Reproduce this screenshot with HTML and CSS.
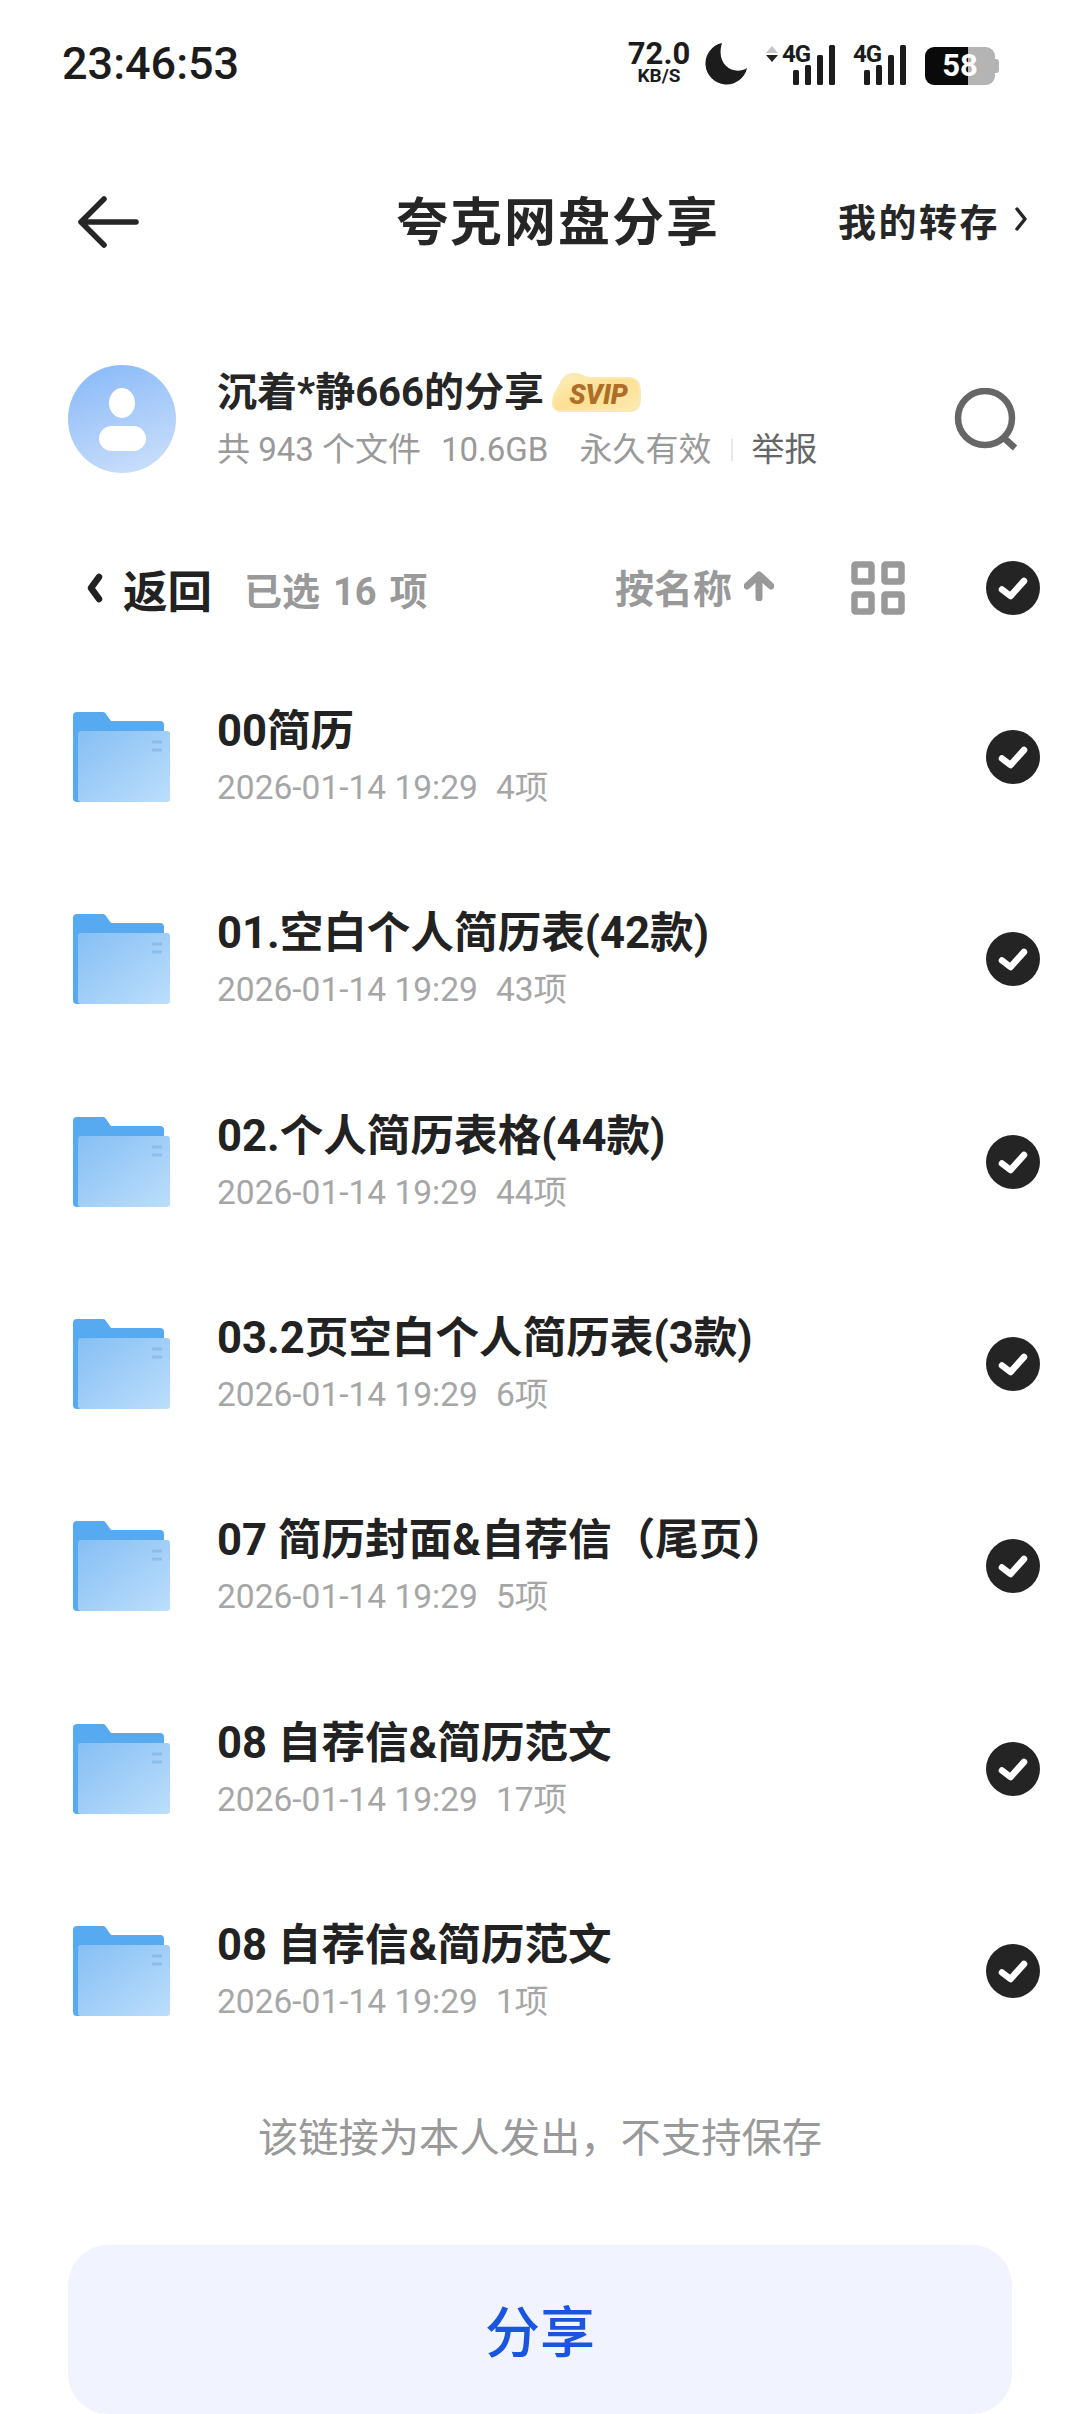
FILE: index.html
```html
<!DOCTYPE html>
<html lang="zh-CN">
<head>
    <meta charset="UTF-8">
    <title>夸克网盘分享</title>
    <link rel="stylesheet" href="styles.css">
</head>
<body>
    <svg class="sprite" aria-hidden="true">
        <defs>
            <linearGradient id="folderFront" x1="0" y1="0" x2="1" y2="1">
                <stop offset="0" stop-color="#86bff4"/>
                <stop offset="1" stop-color="#bcdefc"/>
            </linearGradient>
            <linearGradient id="svipFill" x1="0" y1="0" x2="1" y2="1">
                <stop offset="0" stop-color="#fff0c2"/>
                <stop offset=".5" stop-color="#fcdf90"/>
                <stop offset="1" stop-color="#fdeab4"/>
            </linearGradient>
            <symbol id="folder" viewBox="0 0 97 90">
                <path d="M0 4a4 4 0 0 1 4-4h26a4 4 0 0 1 3 2l5 7h49a4 4 0 0 1 4 4v77H4a4 4 0 0 1-4-4z" fill="#58aaf0"/>
                <rect x="5" y="19" width="92" height="71" rx="3" fill="url(#folderFront)"/>
                <path d="M79 30h10M79 38h10" stroke="#7fb2e2" stroke-width="3" opacity=".6"/>
            </symbol>
            <symbol id="check" viewBox="0 0 54 54">
                <circle cx="27" cy="27" r="27" fill="#242424"/>
                <path d="M16 28.5l8.5 6.5L38 20" fill="none" stroke="#fff" stroke-width="6.5" stroke-linecap="round" stroke-linejoin="round"/>
            </symbol>
            <symbol id="bars" viewBox="0 0 42 40">
                <rect x="0" y="25" width="6" height="15" rx="1.5"/>
                <rect x="12" y="20" width="6" height="20" rx="1.5"/>
                <rect x="24" y="10" width="6" height="30" rx="1.5"/>
                <rect x="36" y="0" width="6" height="40" rx="1.5"/>
            </symbol>
        </defs>
    </svg>

    <div class="status-bar">
        <span class="clock">23:46:53</span>
        <div class="status-icons">
            <div class="speed">
                <span class="speed-num">72.0</span>
                <span class="speed-unit">KB/S</span>
            </div>
            <svg class="moon" viewBox="0 0 42 42"><path d="M17 0A21 21 0 1 0 42 25C30 33 10 23 17 0z" fill="#1c1c1c"/></svg>
            <div class="signal signal-first">
                <svg class="arrows" viewBox="0 0 12 16"><path d="M6 0l6 7H0z" fill="#c4c4c4"/><path d="M6 16L0 9h12z" fill="#222"/></svg>
                <span class="net">4G</span>
                <svg class="bars"><use href="#bars"/></svg>
            </div>
            <div class="signal signal-second">
                <span class="net">4G</span>
                <svg class="bars"><use href="#bars"/></svg>
            </div>
            <div class="battery">58</div>
        </div>
    </div>

    <div class="top-bar">
        <svg class="back-arrow" viewBox="0 0 62 52"><path d="M27 3L4 26l23 23M4 26h55" fill="none" stroke="#262626" stroke-width="5.5" stroke-linecap="round" stroke-linejoin="round"/></svg>
        <h1 class="page-title">夸克网盘分享</h1>
        <div class="saved-link">我的转存
            <svg class="saved-chevron" viewBox="0 0 12 24"><path d="M2 2l8 10-8 10" fill="none" stroke="#262626" stroke-width="3.5" stroke-linecap="round" stroke-linejoin="round"/></svg>
        </div>
    </div>

    <div class="share-info">
        <div class="avatar">
            <span class="avatar-head"></span>
            <span class="avatar-body"></span>
        </div>
        <div class="share-text">
            <div class="share-name">沉着*静666的分享
                <span class="svip">
                    <svg class="svip-cloud" viewBox="0 0 89 40"><path d="M8 38C2 38 0 32 1 27c1-7 5-11 8-17C12 3 18 0 25 1c5 1 8 4 13 4h38c8 0 12 5 12 13v9c0 7-4 11-10 11z" fill="url(#svipFill)" stroke="#fbe9b4" stroke-width="2"/></svg>
                    <span class="svip-text">SVIP</span>
                </span>
            </div>
            <div class="share-meta">
                <span>共 943 个文件</span>
                <span class="share-size">10.6GB</span>
                <span class="share-expire">永久有效</span>
                <span class="divider"></span>
                <span class="report">举报</span>
            </div>
        </div>
        <svg class="search" viewBox="0 0 66 64"><circle cx="31" cy="30" r="27" fill="none" stroke="#666" stroke-width="6.5"/><path d="M50 50l11 10" stroke="#666" stroke-width="6.5"/></svg>
    </div>

    <div class="toolbar">
        <svg class="return-chevron" viewBox="0 0 16 30"><path d="M12 4L4 15l8 11" fill="none" stroke="#222" stroke-width="6.5" stroke-linecap="round" stroke-linejoin="round"/></svg>
        <span class="return-label">返回</span>
        <span class="selected-count">已选 16 项</span>
        <span class="sort-label">按名称
            <svg class="sort-arrow" viewBox="0 0 30 30"><path d="M15 27V5M3 15L15 4l12 11" fill="none" stroke="#999" stroke-width="7" stroke-linecap="round" stroke-linejoin="round"/></svg>
        </span>
        <svg class="grid-icon" viewBox="0 0 54 54">
            <g fill="none" stroke="#999" stroke-width="6.5">
                <rect x="3.500" y="3.500" width="17" height="17" rx="1"/>
                <rect x="33.500" y="3.500" width="17" height="17" rx="1"/>
                <rect x="3.500" y="33.500" width="17" height="17" rx="1"/>
                <rect x="33.500" y="33.500" width="17" height="17" rx="1"/>
            </g>
        </svg>
        <svg class="check"><use href="#check"/></svg>
    </div>

    <ul class="file-list">
        <li class="file-row">
            <svg class="folder"><use href="#folder"/></svg>
            <div class="file-text">
                <div class="file-name">00简历</div>
                <div class="file-meta">2026-01-14 19:29<span class="file-count">4项</span></div>
            </div>
            <svg class="check"><use href="#check"/></svg>
        </li>
        <li class="file-row">
            <svg class="folder"><use href="#folder"/></svg>
            <div class="file-text">
                <div class="file-name">01.空白个人简历表(42款)</div>
                <div class="file-meta">2026-01-14 19:29<span class="file-count">43项</span></div>
            </div>
            <svg class="check"><use href="#check"/></svg>
        </li>
        <li class="file-row">
            <svg class="folder"><use href="#folder"/></svg>
            <div class="file-text">
                <div class="file-name">02.个人简历表格(44款)</div>
                <div class="file-meta">2026-01-14 19:29<span class="file-count">44项</span></div>
            </div>
            <svg class="check"><use href="#check"/></svg>
        </li>
        <li class="file-row">
            <svg class="folder"><use href="#folder"/></svg>
            <div class="file-text">
                <div class="file-name">03.2页空白个人简历表(3款)</div>
                <div class="file-meta">2026-01-14 19:29<span class="file-count">6项</span></div>
            </div>
            <svg class="check"><use href="#check"/></svg>
        </li>
        <li class="file-row">
            <svg class="folder"><use href="#folder"/></svg>
            <div class="file-text">
                <div class="file-name">07 简历封面&amp;自荐信（尾页）</div>
                <div class="file-meta">2026-01-14 19:29<span class="file-count">5项</span></div>
            </div>
            <svg class="check"><use href="#check"/></svg>
        </li>
        <li class="file-row">
            <svg class="folder"><use href="#folder"/></svg>
            <div class="file-text">
                <div class="file-name">08 自荐信&amp;简历范文</div>
                <div class="file-meta">2026-01-14 19:29<span class="file-count">17项</span></div>
            </div>
            <svg class="check"><use href="#check"/></svg>
        </li>
        <li class="file-row">
            <svg class="folder"><use href="#folder"/></svg>
            <div class="file-text">
                <div class="file-name">08 自荐信&amp;简历范文</div>
                <div class="file-meta">2026-01-14 19:29<span class="file-count">1项</span></div>
            </div>
            <svg class="check"><use href="#check"/></svg>
        </li>
    </ul>

    <p class="notice">该链接为本人发出，不支持保存</p>
    <button class="share-button" type="button">分享</button>
</body>
</html>
```

FILE: styles.css
```css
* {
    box-sizing: border-box;
}

html, body {
    margin: 0;
    padding: 0;
}

body {
    width: 1080px;
    height: 2414px;
    overflow: hidden;
    background-color: #fff;
    color: #222;
    font-family: Roboto, "Noto Sans CJK SC", sans-serif;
    display: flex;
    flex-direction: column;
}

.sprite {
    width: 0;
    height: 0;
    display: block;
}

/* status bar */
.status-bar {
    height: 126px;
    padding: 0 0 0 62px;
    display: flex;
    align-items: center;
    flex-shrink: 0;
}

.clock {
    font-size: 45px;
    font-weight: 500;
    color: #1c1c1c;
}

.status-icons {
    margin-left: auto;
    width: 453px;
    height: 44px;
    display: flex;
    align-items: flex-end;
    color: #1c1c1c;
}

.speed {
    width: 64px;
    display: flex;
    flex-direction: column;
    align-items: center;
    margin-right: 14px;
    font-weight: 700;
    line-height: 1;
}

.speed-num {
    font-size: 31px;
    height: 26px;
    line-height: 26px;
}

.speed-unit {
    font-size: 19px;
    height: 18px;
    line-height: 18px;
}

.moon {
    width: 42px;
    height: 42px;
    margin-right: 19px;
}

.signal {
    position: relative;
    height: 40px;
    display: flex;
    align-items: flex-end;
    justify-content: flex-end;
}

.signal-first {
    width: 69px;
    margin-right: 18px;
}

.signal-second {
    width: 53px;
    margin-right: 19px;
}

.arrows {
    position: absolute;
    left: 0;
    top: 1px;
    width: 12px;
    height: 16px;
}

.net {
    position: absolute;
    top: -2px;
    font-size: 24px;
    font-weight: 700;
    line-height: 22px;
    letter-spacing: -1px;
}

.signal-first .net {
    left: 16px;
}

.signal-second .net {
    left: 0;
}

.bars {
    width: 42px;
    height: 40px;
    fill: #1c1c1c;
}

.battery {
    position: relative;
    width: 70px;
    height: 38px;
    border-radius: 9px;
    background: linear-gradient(to right, #0a0a0a 61%, #b4b4b4 61%);
    color: #fff;
    font-size: 31px;
    font-weight: 700;
    line-height: 38px;
    text-align: center;
}

.battery::after {
    content: "";
    position: absolute;
    left: 70px;
    top: 12px;
    width: 4px;
    height: 14px;
    border-radius: 0 3px 3px 0;
    background-color: #b4b4b4;
}

/* title bar */
.top-bar {
    height: 192px;
    position: relative;
    display: flex;
    align-items: center;
    flex-shrink: 0;
}

.back-arrow {
    width: 62px;
    height: 52px;
    margin-left: 77px;
}

.page-title {
    position: absolute;
    left: 396px;
    top: 64px;
    margin: 0;
    font-size: 52px;
    line-height: 68px;
    font-weight: 700;
    letter-spacing: 2px;
    color: #262626;
}

.saved-link {
    margin-left: auto;
    margin-right: 53px;
    margin-bottom: 6px;
    display: flex;
    align-items: center;
    font-size: 38px;
    font-weight: 700;
    letter-spacing: 2.500px;
    color: #262626;
}

.saved-chevron {
    width: 12px;
    height: 24px;
    margin-left: 15px;
}

/* share info */
.share-info {
    height: 228px;
    padding: 47px 60px 0 68px;
    display: flex;
    align-items: flex-start;
    flex-shrink: 0;
}

.avatar {
    width: 108px;
    height: 108px;
    border-radius: 50%;
    background: linear-gradient(160deg, #86b8f8, #cfe1fb);
    display: flex;
    flex-direction: column;
    align-items: center;
    justify-content: center;
    gap: 8px;
    flex-shrink: 0;
}

.avatar-head {
    width: 26px;
    height: 30px;
    border-radius: 50%;
    background-color: #fff;
}

.avatar-body {
    width: 47px;
    height: 25px;
    border-radius: 13px;
    background-color: #fff;
}

.share-text {
    margin-left: 41px;
    flex: 1;
}

.share-name {
    font-size: 40px;
    line-height: 56px;
    font-weight: 700;
    color: #262626;
    display: flex;
    align-items: center;
    white-space: nowrap;
}

.svip {
    position: relative;
    margin-left: 8px;
    width: 89px;
    height: 40px;
    display: flex;
    align-items: center;
    justify-content: center;
}

.svip-cloud {
    position: absolute;
    left: 0;
    top: 0;
    width: 89px;
    height: 40px;
}

.svip-text {
    position: relative;
    padding: 3px 0 0 4px;
    color: #ad6e28;
    font-size: 27px;
    line-height: 34px;
    font-weight: 900;
    font-style: italic;
}

.share-meta {
    margin-top: 7px;
    font-size: 33px;
    line-height: 44px;
    color: #999;
    display: flex;
    align-items: center;
}

.share-size {
    margin-left: 20px;
}

.share-expire {
    margin-left: 31px;
}

.divider {
    width: 2px;
    height: 22px;
    margin: 0 18px 0 20px;
    background-color: #e8e8e8;
}

.report {
    color: #666;
}

.search {
    width: 66px;
    height: 64px;
    margin-top: 23px;
    flex-shrink: 0;
}

/* selection toolbar */
.toolbar {
    height: 84px;
    margin-bottom: 26px;
    padding: 0 40px 0 87px;
    display: flex;
    align-items: center;
    flex-shrink: 0;
}

.return-chevron {
    width: 16px;
    height: 30px;
}

.return-label {
    margin-left: 20px;
    font-size: 44.500px;
    font-weight: 700;
    color: #222;
    padding-top: 1px;
}

.selected-count {
    margin-left: 32px;
    font-size: 38px;
    font-weight: 700;
    color: #999;
    white-space: pre;
    word-spacing: 3.500px;
    padding-top: 1px;
}

.sort-label {
    margin-left: auto;
    padding-bottom: 4px;
    display: flex;
    align-items: center;
    gap: 12px;
    font-size: 39px;
    font-weight: 700;
    color: #999;
}

.sort-arrow {
    width: 30px;
    height: 30px;
}

.grid-icon {
    width: 54px;
    height: 54px;
    margin-left: 77px;
}

.check {
    width: 54px;
    height: 54px;
    flex-shrink: 0;
}

.toolbar .check {
    margin-left: 81px;
}

/* file rows */
.file-list {
    list-style: none;
    margin: 0;
    padding: 0;
    flex-shrink: 0;
}

.file-row {
    height: 202.300px;
    padding: 0 40px 0 73px;
    display: flex;
    align-items: center;
}

.folder {
    width: 97px;
    height: 90px;
    flex-shrink: 0;
}

.file-text {
    margin-left: 47px;
    flex: 1;
}

.file-name {
    font-size: 43.600px;
    line-height: 56px;
    font-weight: 700;
    color: #222;
}

.file-meta {
    margin-top: 6px;
    font-size: 33.500px;
    line-height: 44px;
    color: #a6a6a6;
}

.file-count {
    margin-left: 18px;
}

/* footer */
.notice {
    margin: 29px 0 0;
    height: 76px;
    font-size: 40.300px;
    line-height: 76px;
    color: #999;
    text-align: center;
    flex-shrink: 0;
}

.share-button {
    margin: auto 68px 0;
    height: 169px;
    padding: 0 0 4px;
    border: none;
    border-radius: 40px;
    background-color: #f1f3fe;
    color: #1a55e0;
    font-family: inherit;
    font-size: 55px;
    font-weight: 500;
}
```
